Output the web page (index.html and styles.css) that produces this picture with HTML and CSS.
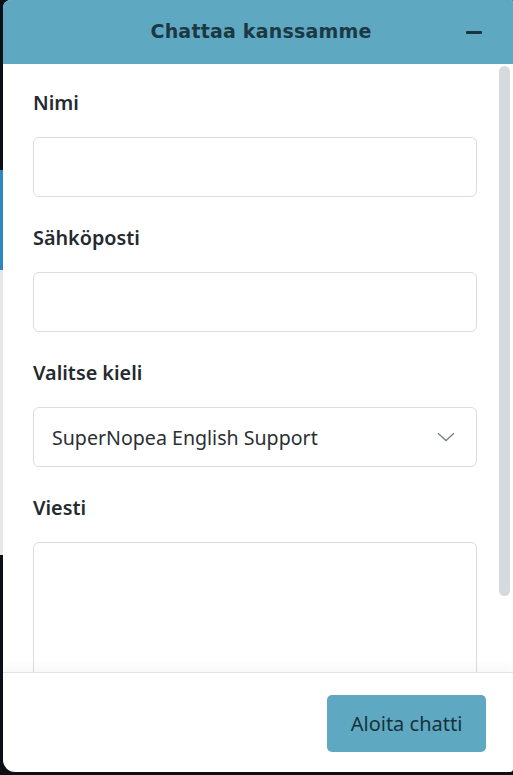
FILE: index.html
```html
<!DOCTYPE html>
<html lang="fi">
<head>
<meta charset="utf-8">
<title>Chattaa kanssamme</title>
<link rel="stylesheet" href="styles.css">
</head>
<body>
<div class="widget">
  <header class="head">
    <h1 class="title">Chattaa kanssamme</h1>
    <button class="minimize" aria-label="Pienennä"><span class="bar"></span></button>
  </header>
  <div class="body">
    <form class="form">
      <div class="field">
        <label class="label">Nimi</label>
        <div class="input"></div>
      </div>
      <div class="field">
        <label class="label">Sähköposti</label>
        <div class="input"></div>
      </div>
      <div class="field">
        <label class="label">Valitse kieli</label>
        <div class="input select">
          <span class="select-text">SuperNopea English Support</span>
          <svg class="chevron" width="18" height="10" viewBox="0 0 18 10"><path d="M1 1.2 L9 8.6 L17 1.2" fill="none" stroke="#7a7f84" stroke-width="1.3"/></svg>
        </div>
      </div>
      <div class="field">
        <label class="label">Viesti</label>
        <div class="input textarea"></div>
      </div>
    </form>
    <div class="scrollbar"><div class="thumb"></div></div>
  </div>
  <footer class="foot">
    <button class="start">Aloita chatti</button>
  </footer>
</div>
</body>
</html>
```

FILE: styles.css
```css
html {
  height: 100%;
  background: linear-gradient(to bottom, #0c1016 0, #0c1016 170px, #2c87c1 170px, #2c87c1 270px, #e7e7e7 270px, #e7e7e7 555px, #0c1016 555px);
}
body {
  margin: 0;
  height: 775px;
  overflow: hidden;
  font-family: "Noto Sans", "Open Sans", sans-serif;
}
.widget {
  margin-left: 3px;
  width: 510px;
  height: 772px;
  background: #fff;
  border-radius: 8px 2px 3px 12px;
  overflow: hidden;
  display: flex;
  flex-direction: column;
}
.head {
  height: 64px;
  flex: none;
  background: #5fa8c1;
  display: flex;
  align-items: center;
  justify-content: center;
  position: relative;
}
.title {
  margin: 0;
  font-family: "DejaVu Sans", sans-serif;
  font-weight: bold;
  font-size: 19px;
  color: #1b3944;
  letter-spacing: 0.2px;
  transform: translate(3px, -1px);
}
.minimize {
  position: absolute;
  right: 28px;
  top: 22px;
  width: 22px;
  height: 20px;
  padding: 0;
  border: 0;
  background: transparent;
  display: flex;
  align-items: center;
  justify-content: center;
}
.bar {
  display: block;
  width: 16px;
  height: 3px;
  background: #1b3440;
  border-radius: 1px;
}
.body {
  flex: 1;
  display: flex;
  overflow: hidden;
  min-height: 0;
}
.form {
  padding: 26px 0 0 30px;
  width: 444px;
  flex: none;
}
.field {
  margin-bottom: 28px;
}
.label {
  display: block;
  font-weight: 600;
  font-size: 19.8px;
  line-height: 26px;
  color: #242a2f;
  margin-bottom: 21px;
}
.input {
  height: 60px;
  box-sizing: border-box;
  border: 1px solid #dcdcdc;
  border-radius: 6px;
  background: #fff;
}
.select {
  display: flex;
  align-items: center;
  justify-content: space-between;
  padding: 0 21px 0 18px;
}
.select-text {
  font-size: 19.6px;
  color: #2b2f33;
}
.chevron {
  display: block;
}
.textarea {
  height: 160px;
}
.scrollbar {
  margin: 2px 3px 0 22px;
  width: 11px;
  flex: none;
}
.thumb {
  height: 530px;
  background: #d6dadd;
  border-radius: 6px;
}
.foot {
  height: 100px;
  flex: none;
  box-sizing: border-box;
  border-top: 1px solid #e3e3e3;
  box-shadow: 0 -5px 10px rgba(0, 0, 0, 0.035);
  display: flex;
  justify-content: flex-end;
  align-items: flex-start;
  padding: 22px 27px 0 0;
  position: relative;
}
.start {
  width: 159px;
  height: 57px;
  border: 0;
  border-radius: 5px;
  background: #5fa8c1;
  color: #17323c;
  font-family: "Noto Sans", "Open Sans", sans-serif;
  font-size: 20px;
  padding: 0;
}
```
